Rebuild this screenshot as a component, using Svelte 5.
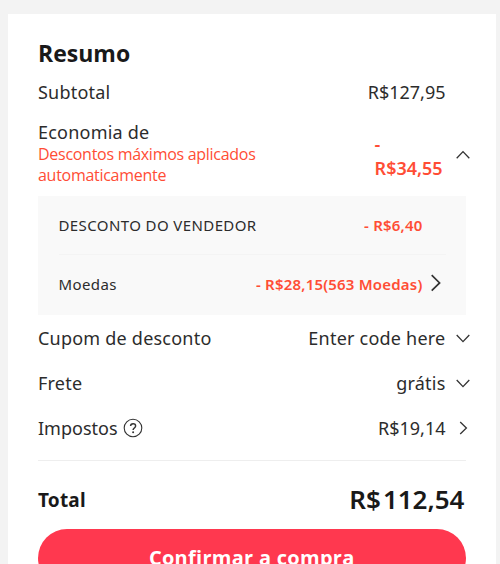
<script>
  const options = [
    { label: 'Cupom de desconto', value: 'Enter code here', icon: 'down', roomy: true },
    { label: 'Frete', value: 'grátis', icon: 'down', roomy: true },
    { label: 'Impostos', value: 'R$19,14', icon: 'right', help: true }
  ];
</script>

{#snippet chevron(kind)}
  <svg class="chevron" width="16" height="16" viewBox="0 0 16 16">
    {#if kind === 'up'}
      <path d="M1.7 11.2 8 4.6l6.3 6.6" />
    {:else if kind === 'down'}
      <path d="M1.7 5 8 11.6 14.3 5" />
    {:else}
      <path d="M5.2 2 11.4 8l-6.2 6" />
    {/if}
  </svg>
{/snippet}

<main>
  <section class="card">
    <h1>Resumo</h1>
    <div class="row subtotal"><span class="roomy">Subtotal</span><span class="value">R$127,95</span></div>
    <div class="savings">
      <div class="about">
        <div class="name roomy">Economia de</div>
        <div class="note">Descontos máximos aplicados<br />automaticamente</div>
      </div>
      <div class="saved">-<br />R$34,55</div>
      {@render chevron('up')}
    </div>
    <div class="details">
      <div class="detail first"><span>DESCONTO DO VENDEDOR</span><b>- R$6,40</b></div>
      <div class="detail coins">
        <span>Moedas</span><b>- R$28,15(563 Moedas)</b>
        <svg class="more" width="12" height="20" viewBox="0 0 12 20"><path d="m1.7 2.2 7.9 7.7-7.9 7.7" /></svg>
      </div>
    </div>
    {#each options as o}
      <div class="row" class:roomy={o.roomy}>
        <span class="label">{o.label}
          {#if o.help}
            <svg class="help" width="20" height="20" viewBox="0 0 20 20">
              <circle cx="10" cy="10" r="8.8" />
              <path class="mark" d="M7.6 8.1c0-3.3 5-3.2 5-.2 0 2-2.5 2.1-2.5 4.1" />
              <circle class="dot" cx="10.1" cy="14.2" r="1" />
            </svg>
          {/if}
        </span>
        <span class="value">{o.value}</span>
        {@render chevron(o.icon)}
      </div>
    {/each}
    <hr />
    <div class="total"><span>Total</span><strong><span class="currency">R$</span>112,54</strong></div>
    <button>Confirmar a compra</button>
  </section>
</main>

<style>
  :global(body) { overflow: hidden; }
  main {
    box-sizing: border-box;
    height: 564px;
    padding: 14px 4px 0 8px;
    overflow: hidden;
    background: #f3f3f3;
    font-family: "Noto Sans", "Open Sans", sans-serif;
    color: #2c2c2c;
  }
  .card {
    box-sizing: border-box;
    height: 620px;
    padding: 20px 30.5px 0 30px;
    background: #fff;
  }
  h1 {
    margin: 0;
    height: 38px;
    line-height: 38px;
    font-family: "Open Sans", "Noto Sans", sans-serif;
    font-size: 23px;
    font-weight: 700;
    color: #191919;
  }
  .row {
    display: flex;
    align-items: center;
    height: 45px;
    margin-right: -5px;
    font-size: 18px;
    font-weight: 400;
    white-space: nowrap;
  }
  .roomy { letter-spacing: 0.22px; }
  .row.subtotal { height: 40px; padding-right: 25px; box-sizing: border-box; }
  .value { margin-left: auto; }
  .row .chevron { margin-left: 9px; }
  .label { display: flex; align-items: center; gap: 5px; }
  svg { flex: none; fill: none; stroke: #333; stroke-width: 1.3; }
  .help { stroke-width: 1.1; }
  .mark { stroke-width: 1.5; }
  .dot { fill: #333; stroke: none; }
  .savings {
    display: flex;
    height: 84px;
    margin-right: -5px;
  }
  .about { padding-top: 8px; width: 337px; }
  .name { font-size: 18px; line-height: 24px; }
  .note {
    font-family: "Open Sans", "Noto Sans", sans-serif;
    font-size: 16px;
    font-weight: 400;
    line-height: 21px;
    letter-spacing: -0.28px;
    color: #ff4d35;
  }
  .saved {
    width: 80px;
    padding-top: 20px;
    line-height: 24px;
    font-size: 18px;
    font-weight: 600;
    color: #ff4d35;
  }
  .savings .chevron { margin-top: 35px; }
  .details {
    height: 119px;
    padding: 0 20px 0 20.5px;
    box-sizing: border-box;
    background: #f9f9f9;
  }
  .detail {
    display: flex;
    align-items: center;
    height: 59px;
    box-sizing: border-box;
    font-size: 15px;
    letter-spacing: 0.4px;
  }
  .first { border-bottom: 1px solid #f4f4f4; }
  .detail b {
    margin-left: auto;
    margin-right: 23px;
    font-weight: 600;
    letter-spacing: 0.2px;
    color: #ff4d35;
  }
  .coins { padding-bottom: 2px; }
  .coins b { margin-right: 7px; }
  .more { margin: 0 4px 2px 0; stroke-width: 1.7; }
  hr { height: 1px; border: 0; margin: 10px 0 0; background: #eee; }
  .total {
    display: flex;
    align-items: center;
    justify-content: space-between;
    height: 68px;
    padding-top: 9px;
    box-sizing: border-box;
    color: #191919;
    font-weight: 700;
    font-size: 19px;
    letter-spacing: 0.2px;
  }
  .total strong {
    font-size: 26px;
    font-weight: 600;
    letter-spacing: 0;
    padding: 0 1px 1px 0;
  }
  .currency { margin-right: 2px; }
  button {
    display: block;
    width: 100%;
    height: 58px;
    padding: 0 0 2px;
    border: 0;
    border-radius: 29px;
    background: #ff384f;
    color: #fff;
    font: 700 20px "Open Sans", "Noto Sans", sans-serif;
    letter-spacing: 0.28px;
  }
</style>
